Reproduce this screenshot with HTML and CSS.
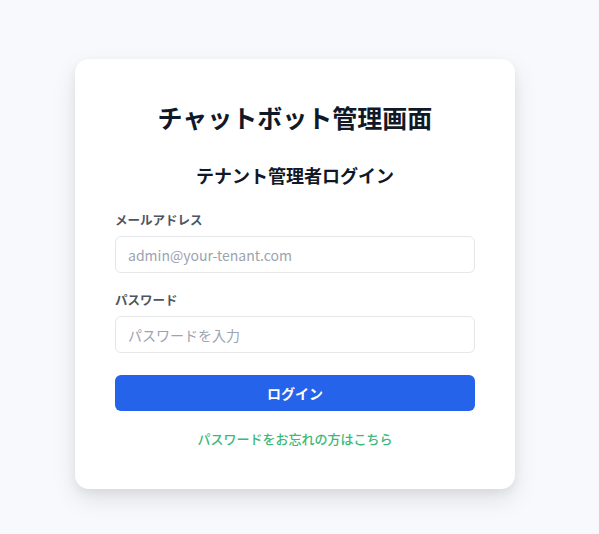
FILE: index.html
```html
<!DOCTYPE html>
<html lang="ja">
<head>
<meta charset="utf-8">
<link rel="stylesheet" href="styles.css">
</head>
<body>
<div class="page">
  <div class="card">
    <h1 class="title">チャットボット管理画面</h1>
    <h2 class="subtitle">テナント管理者ログイン</h2>
    <form class="form">
      <div class="field">
        <label class="label">メールアドレス</label>
        <input class="input" type="email" placeholder="admin@your-tenant.com">
      </div>
      <div class="field">
        <label class="label">パスワード</label>
        <input class="input" type="password" placeholder="パスワードを入力">
      </div>
      <button class="btn" type="button">ログイン</button>
    </form>
    <a class="link" href="#">パスワードをお忘れの方はこちら</a>
  </div>
</div>
</body>
</html>
```

FILE: styles.css
```css
* { box-sizing: border-box; }
html, body { margin: 0; padding: 0; }
body {
  background: #f8f9fc;
  font-family: "Noto Sans CJK JP", "Noto Sans", sans-serif;
  color: #111827;
}
.page {
  width: 599px;
  height: 534px;
  padding: 59px 0 0 75px;
}
.card {
  width: 440px;
  height: 430px;
  background: #ffffff;
  border-radius: 14px;
  box-shadow: 0 10px 25px rgba(0, 0, 0, 0.10), 0 4px 10px rgba(0, 0, 0, 0.05);
  padding: 40px 40px;
  display: flex;
  flex-direction: column;
}
.title {
  margin: 0;
  font-size: 25px;
  line-height: 37px;
  font-weight: 700;
  text-align: center;
  color: #111827;
}
.subtitle {
  margin: 26px 0 0;
  font-size: 18px;
  line-height: 27px;
  font-weight: 700;
  text-align: center;
  color: #111827;
}
.form {
  margin-top: 21px;
  display: flex;
  flex-direction: column;
}
.field {
  display: flex;
  flex-direction: column;
  margin-bottom: 17px;
}
.field + .field { margin-bottom: 22px; }
.label {
  font-size: 12.5px;
  line-height: 20px;
  font-weight: 700;
  color: #4b5563;
  margin-bottom: 6px;
}
.input {
  width: 360px;
  height: 37px;
  border: 1px solid #e5e7eb;
  border-radius: 6px;
  padding: 0 12px;
  font-family: "Noto Sans CJK JP", "Noto Sans", sans-serif;
  font-size: 14px;
  color: #111827;
  background: #fff;
  outline: none;
}
.input::placeholder { color: #9ca3af; }
.btn {
  width: 360px;
  height: 36px;
  border: none;
  border-radius: 6px;
  background: #2563eb;
  color: #fff;
  font-family: "Noto Sans CJK JP", "Noto Sans", sans-serif;
  font-size: 14px;
  font-weight: 700;
  cursor: pointer;
}
.link {
  margin-top: 18px;
  font-size: 13px;
  line-height: 20px;
  font-weight: 500;
  text-align: center;
  color: #3cb878;
  text-decoration: none;
}
```
